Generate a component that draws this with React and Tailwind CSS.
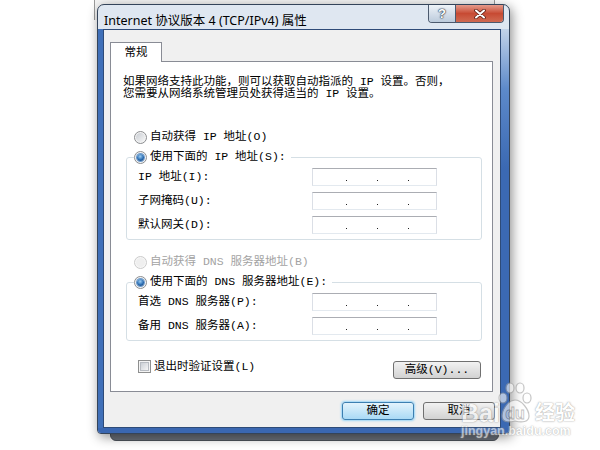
import React from "react";

const sim = "font-['Liberation_Mono','Noto_Sans_CJK_SC',monospace] text-[11.5px] leading-[12px]";

function Radio({ checked = false, disabled = false }) {
  return (
    <span
      className={`flex h-[13px] w-[13px] shrink-0 items-center justify-center rounded-full border ${
        disabled ? "border-[#cbcbcb] bg-[#f7f7f7]" : "border-[#8b8d90] bg-[#f4f4f4]"
      }`}
    >
      {checked ? (
        <span className="h-[7px] w-[7px] rounded-full bg-[radial-gradient(circle_at_45%_35%,#9ccdf3,#2b6db2_55%,#0e3468)] shadow-[0_0_0_1px_#6d9bcc]" />
      ) : (
        <span
          className={`h-[9px] w-[9px] rounded-full ${
            disabled ? "bg-[#efefef]" : "bg-linear-to-br from-[#c9cdd3] to-[#f7f7f7]"
          }`}
        />
      )}
    </span>
  );
}

function RadioRow({ label, checked, disabled }) {
  return (
    <span className={`flex h-[14px] items-center gap-[3px] ${disabled ? "text-[#a3a3a3]" : "text-black"}`}>
      <Radio checked={checked} disabled={disabled} />
      <span className={sim}>{label}</span>
    </span>
  );
}

function IpBox() {
  return (
    <div className="flex h-[18px] w-[125px] items-end gap-[30px] border border-[#abadb3] border-x-[#dbdfe6] border-b-[#e3e9ef] bg-white pb-[4px] pl-[33px]">
      <span className="h-px w-px bg-[#222]" />
      <span className="h-px w-px bg-[#222]" />
      <span className="h-px w-px bg-[#222]" />
    </div>
  );
}

function IpRow({ label }) {
  return (
    <div className="flex h-[18px] items-center">
      <span className={`w-[174px] ${sim}`}>{label}</span>
      <IpBox />
    </div>
  );
}

function Group({ legend, children }) {
  return (
    <fieldset className="ml-[3px] w-[356px] rounded-[3px] border border-[#d5dfe5]">
      <legend className="ml-[7px] pr-[5px]">{legend}</legend>
      <div className="flex flex-col gap-[6px] pb-[5px] pl-[11px] pt-[4px]">{children}</div>
    </fieldset>
  );
}

function Btn({ children, primary = false, className = "" }) {
  return (
    <div
      className={`flex h-[18px] items-center justify-center rounded-[3px] border text-black ${
        primary
          ? "border-[#3c7fb1] bg-linear-to-b from-[#e3f3fc] to-[#a9daf5] shadow-[0_0_2px_1px_#9bd6f7]"
          : "border-[#707070] bg-linear-to-b from-[#f2f2f2] to-[#d2d2d2]"
      } ${sim} ${className}`}
    >
      {children}
    </div>
  );
}

function Checkbox() {
  return (
    <span className="flex h-[13px] w-[13px] items-center justify-center border border-[#8e8f8f] bg-[#f4f4f4]">
      <span className="h-[9px] w-[9px] border border-[#b8bcc2] bg-linear-to-br from-[#cbcfd5] to-[#f6f6f6]" />
    </span>
  );
}

const frame = "bg-linear-to-b from-[#c3d3e8] via-[#5d8aca] via-15% to-[#3b69b3] to-35%";

export default function App() {
  return (
    <div className="relative h-[450px] w-[600px] overflow-hidden bg-white">
      {/* parent window peeking out */}
      <div className="absolute left-[94px] top-[-20px] h-[40px] w-[401px] border-x border-[#9a9a9a] bg-[#f4f4f4]" />
      <div className="absolute left-[110px] top-[420px] h-[21px] w-[389px] rounded-b-[6px] border border-[#4d525a] bg-[#6a7079]" />

      {/* dialog */}
      <div className="absolute left-[97px] top-[4px] flex h-[430px] w-[413px] flex-col overflow-hidden rounded-t-[7px] rounded-b-[4px] border border-[#34445a] bg-[#dfe7f1] shadow-[2px_3px_12px_rgba(0,0,0,0.45)]">
        <div className="flex h-[24px] shrink-0 items-start justify-between">
          <span className="pl-[6px] pt-[8px] font-['Noto_Sans','Noto_Sans_CJK_SC',sans-serif] text-[12.5px] leading-[16px] text-black">
            Internet 协议版本 4 (TCP/IPv4) 属性
          </span>
          <div className="mr-[5px] flex h-[18px] overflow-hidden rounded-b-[4px] border border-t-0 border-[#4c5a6e]">
            <div className="flex w-[26px] items-center justify-center bg-linear-to-b from-[#eef3f8] to-[#bccbdc] font-['Liberation_Sans',sans-serif] text-[13px] font-bold leading-none text-white [text-shadow:0_0_1px_#2c3a4c,0_0_1px_#2c3a4c,0_0_2px_#2c3a4c]">
              ?
            </div>
            <div className="w-px bg-[#4c5a6e]" />
            <div className="flex w-[47px] items-center justify-center bg-linear-to-b from-[#e59a8b] via-[#c74a33] to-[#d06a52]">
              <svg width="12" height="10" viewBox="0 0 12 10">
                <path d="M2 1.5 L10 8.5 M10 1.5 L2 8.5" stroke="#5a1d14" strokeWidth="3.6" strokeLinecap="round" />
                <path d="M2 1.5 L10 8.5 M10 1.5 L2 8.5" stroke="#ffffff" strokeWidth="2" strokeLinecap="round" />
              </svg>
            </div>
          </div>
        </div>

        <div className={`flex h-[399px] shrink-0 ${frame}`}>
          {/* left frame + client share one box: the frame is this box's own left border */}
          <div className="flex h-[399px] w-[403px] shrink-0 border-l-[5px] border-solid border-l-[#4070b8]">
            <div className="flex h-[399px] w-[398px] shrink-0 flex-col border border-[#2e4b78] bg-[#f0f0f0] pt-[12px]">
              <div className="ml-[6px] flex">
                <div className={`relative z-10 -mb-px flex h-[20px] w-[52px] items-center justify-center border border-b-0 border-[#898c95] bg-white ${sim}`}>
                  常规
                </div>
              </div>
              <div className="relative z-0 ml-[6px] mr-[7px] border border-[#898c95] bg-white pb-[12px] pl-[12px] pt-[14px] text-black">
                <p className={sim}>
                  如果网络支持此功能，则可以获取自动指派的 IP 设置。否则，
                  <br />
                  您需要从网络系统管理员处获得适当的 IP 设置。
                </p>
                <div className="mt-[30px] pl-[11px]">
                  <RadioRow label="自动获得 IP 地址(O)" />
                </div>
                <div className="mt-[6px]">
                  <Group legend={<RadioRow checked label="使用下面的 IP 地址(S):" />}>
                    <IpRow label="IP 地址(I):" />
                    <IpRow label="子网掩码(U):" />
                    <IpRow label="默认网关(D):" />
                  </Group>
                </div>
                <div className="mt-[15px] pl-[11px]">
                  <RadioRow disabled label="自动获得 DNS 服务器地址(B)" />
                </div>
                <div className="mt-[6px]">
                  <Group legend={<RadioRow checked label="使用下面的 DNS 服务器地址(E):" />}>
                    <IpRow label="首选 DNS 服务器(P):" />
                    <IpRow label="备用 DNS 服务器(A):" />
                  </Group>
                </div>
                <div className="mt-[19px] flex w-[358px] items-start justify-between">
                  <div className="ml-[15px] flex items-center gap-[3px]">
                    <Checkbox />
                    <span className={sim}>退出时验证设置(L)</span>
                  </div>
                  <Btn className="mt-[1px] w-[88px]">高级(V)...</Btn>
                </div>
              </div>
              <div className="mt-[10px] flex justify-end gap-[9px] pr-[5px]">
                <Btn primary className="w-[72px]">确定</Btn>
                <Btn className="w-[72px]">取消</Btn>
              </div>
            </div>
          </div>
          <div className={`w-[8px] shrink-0 ${frame}`} />
        </div>
        <div className="flex-1 bg-[#3a67b1]" />
      </div>

      {/* watermark */}
      <div className="pointer-events-none absolute left-[461px] top-[382px] flex flex-col opacity-60">
        <div className="flex items-end">
          <span className="font-['Liberation_Sans',sans-serif] text-[25px] font-bold leading-[22px] text-white [text-shadow:0_0_1px_#666,0_0_2px_#999]">
            Bai
          </span>
          <svg width="36" height="42" viewBox="0 0 36 42" className="-ml-[2px]">
            <g fill="#fff" stroke="#a0a0a0" strokeWidth="1.2">
              <ellipse cx="5" cy="16" rx="4" ry="5" />
              <ellipse cx="12" cy="6" rx="4" ry="5" />
              <ellipse cx="22" cy="6" rx="4" ry="5" />
              <ellipse cx="29" cy="16" rx="4" ry="5" />
              <path d="M17 18 C 10 18 4 28 4 34 C 4 40 10 41 17 39 C 24 41 31 40 31 34 C 31 28 24 18 17 18 Z" />
            </g>
            <text x="17" y="37" textAnchor="middle" fontFamily="Liberation Sans" fontWeight="bold" fontSize="16" fill="#fff" stroke="#9a9a9a" strokeWidth="0.8">
              du
            </text>
          </svg>
          <span className="ml-[1px] font-['Noto_Sans_CJK_SC',sans-serif] text-[20px] font-bold leading-[24px] text-white [text-shadow:0_0_1px_#666,0_0_2px_#999]">
            经验
          </span>
        </div>
        <span className="mt-[1px] font-['Liberation_Sans',sans-serif] text-[12.5px] font-bold leading-[13px] text-white [text-shadow:0_0_1px_#777,0_0_2px_#aaa]">
          jingyan.baidu.com
        </span>
      </div>
    </div>
  );
}
